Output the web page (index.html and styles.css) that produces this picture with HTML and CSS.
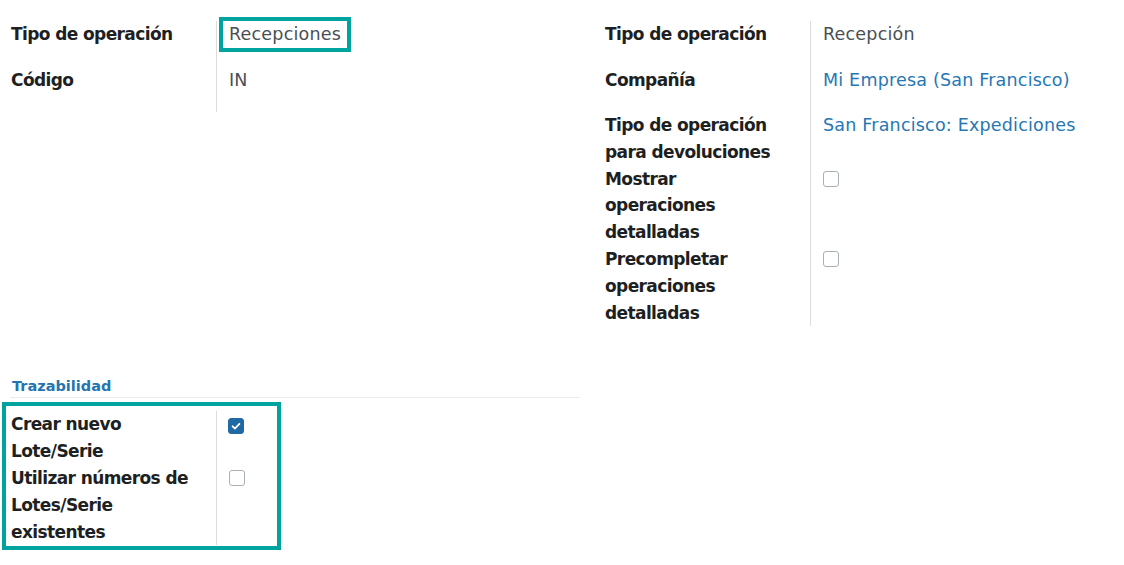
FILE: index.html
```html
<!DOCTYPE html>
<html lang="es">
<head>
<meta charset="utf-8">
<title>Tipo de operación</title>
<link rel="stylesheet" href="styles.css">
</head>
<body>
<div class="sheet">
  <div class="groups">
    <div class="group">
      <div class="row">
        <div class="label">Tipo de operación</div>
        <div class="value"><span class="text highlight">Recepciones</span></div>
      </div>
      <div class="row">
        <div class="label">Código</div>
        <div class="value"><span class="text">IN</span></div>
      </div>
    </div>
    <div class="group">
      <div class="row">
        <div class="label">Tipo de operación</div>
        <div class="value"><span class="text">Recepción</span></div>
      </div>
      <div class="row">
        <div class="label">Compañía</div>
        <div class="value"><a class="link" href="#">Mi Empresa (San Francisco)</a></div>
      </div>
      <div class="row">
        <div class="label">Tipo de operación para devoluciones</div>
        <div class="value"><a class="link" href="#">San Francisco: Expediciones</a></div>
      </div>
      <div class="row">
        <div class="label">Mostrar operaciones detalladas</div>
        <div class="value"><span class="check"></span></div>
      </div>
      <div class="row">
        <div class="label">Precompletar operaciones detalladas</div>
        <div class="value"><span class="check"></span></div>
      </div>
    </div>
  </div>

  <div class="section">
    <div class="section-title">Trazabilidad</div>
    <div class="group boxed">
      <div class="row">
        <div class="label">Crear nuevo Lote/Serie</div>
        <div class="value"><span class="check checked"><svg viewBox="0 0 16 16" width="16" height="16"><path d="M4.6 8.3 L7 10.5 L11.4 5.8" fill="none" stroke="#fff" stroke-width="1.8" stroke-linecap="round" stroke-linejoin="round"/></svg></span></div>
      </div>
      <div class="row">
        <div class="label">Utilizar números de Lotes/Serie existentes</div>
        <div class="value"><span class="check"></span></div>
      </div>
    </div>
  </div>
</div>
</body>
</html>
```

FILE: styles.css
```css
* { box-sizing: border-box; }

html, body {
  margin: 0;
  background: #ffffff;
}

body {
  font-family: "DejaVu Sans", "Noto Sans", sans-serif;
  color: #1e1f22;
}

.sheet {
  padding: 21px 0 0 6px;
}

.groups {
  display: grid;
  grid-template-columns: 574px 1fr;
  column-gap: 20px;
  align-items: start;
}

.group {
  display: flex;
  flex-direction: column;
}

.row {
  display: grid;
  grid-template-columns: 210px 1fr;
  min-height: 45.5px;
}

.label {
  padding: 0 22px 0 5px;
  font-size: 17px;
  font-weight: bold;
  letter-spacing: -0.6px;
  line-height: 26.8px;
  color: #1e1f22;
}

.value {
  border-left: 1px solid #dcdcdc;
  padding-left: 12px;
  font-size: 17.5px;
  line-height: 26.8px;
  letter-spacing: 0.2px;
}

.text {
  color: #4a4f55;
}

.highlight {
  display: inline-block;
  padding: 0 6px;
  margin-left: -6px;
  box-shadow: 0 0 0 4px #00a39e;
}

.link {
  color: #2677b3;
  text-decoration: none;
}

.check {
  display: block;
  width: 16px;
  height: 16px;
  margin-top: 5.5px;
  border: 1px solid #a9b0b8;
  border-radius: 3px;
  background: #fff;
}

.check.checked {
  background: #1f6aa5;
  border-color: #1f6aa5;
  margin-left: -1px;
  margin-top: 7px;
}

.check.checked svg {
  display: block;
  margin: -1px;
}

.section {
  margin-top: 50px;
  width: 574px;
}

.section-title {
  margin-left: 4px;
  padding: 0 0 1px 2px;
  border-bottom: 1px solid #ececec;
  font-size: 14.5px;
  font-weight: bold;
  line-height: 20px;
  color: #2474b0;
}

.boxed {
  width: 279px;
  margin: 4px 0 0 -4px;
  padding: 5px 0 1px 0;
  border: 4px solid #00a39e;
}
```
